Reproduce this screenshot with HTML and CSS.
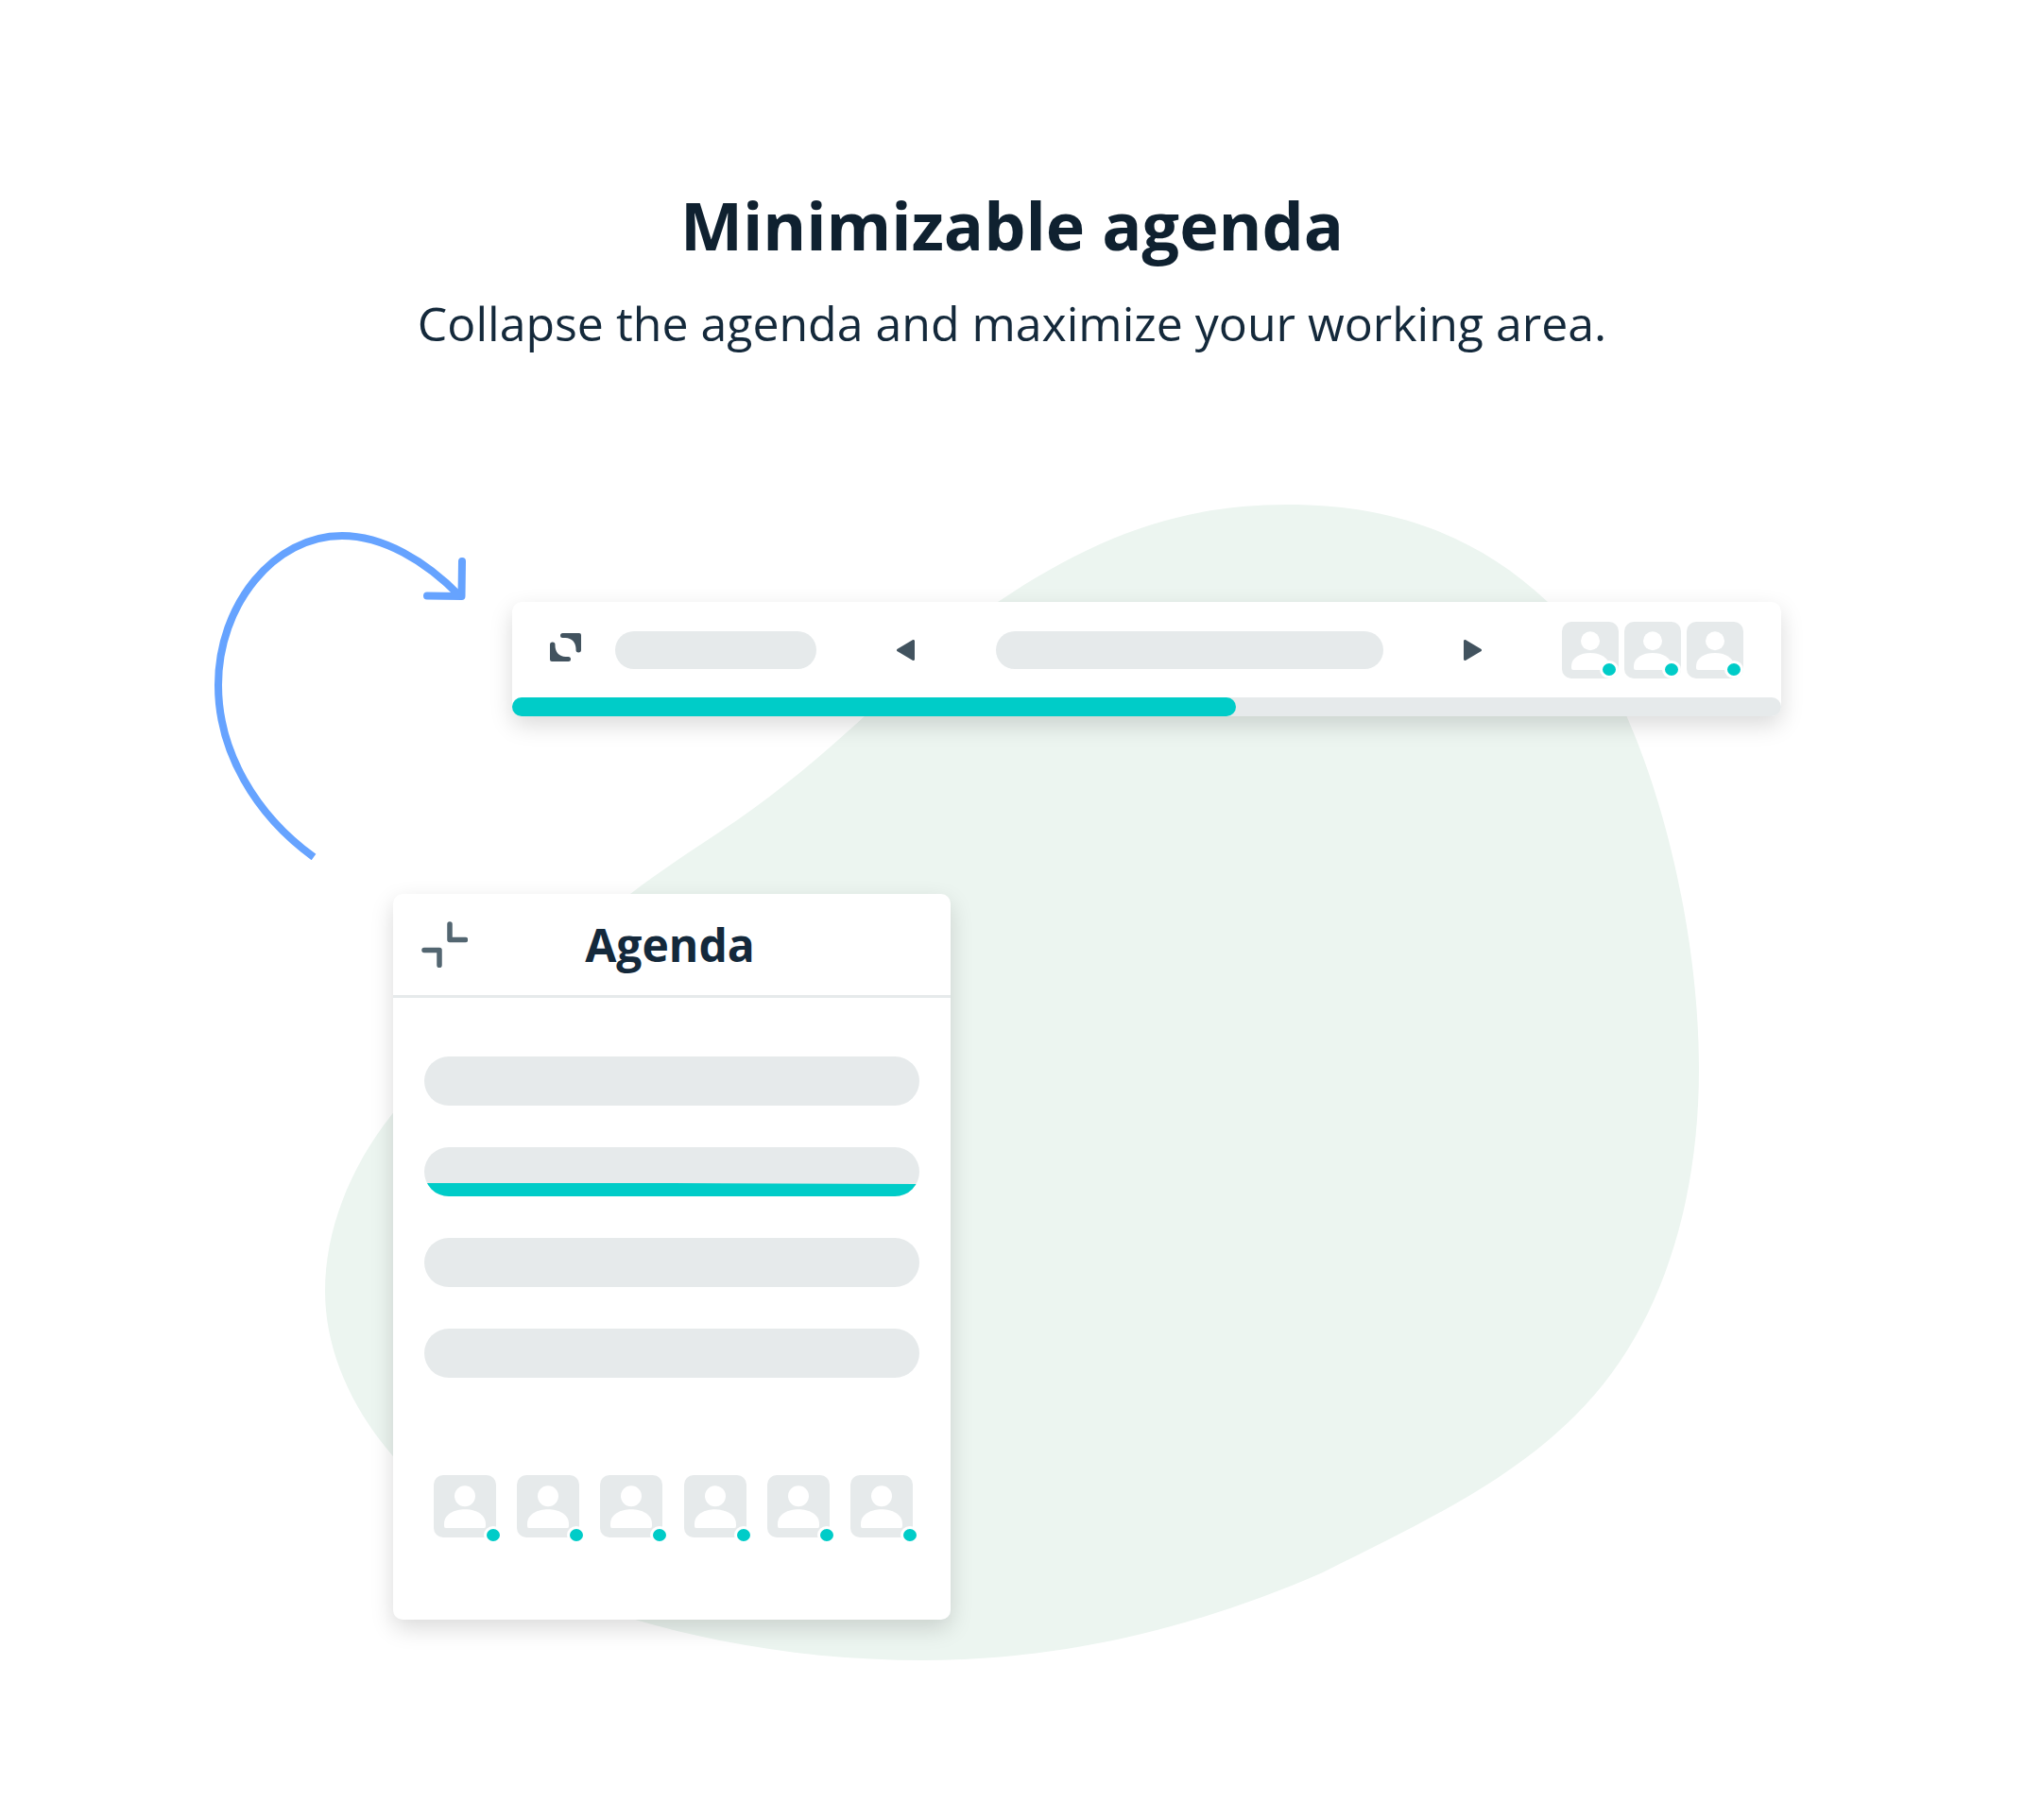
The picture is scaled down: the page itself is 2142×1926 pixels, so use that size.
FILE: index.html
```html
<!DOCTYPE html>
<html lang="en">
<head>
<meta charset="utf-8">
<meta name="viewport" content="width=device-width, initial-scale=1">
<title>Minimizable agenda</title>
<link rel="stylesheet" href="styles.css">
</head>
<body>
<svg class="defs" aria-hidden="true">
  <symbol id="person" viewBox="0 0 60 60">
    <circle cx="30" cy="20.3" r="10"/>
    <path d="M10 47C10 37.500 20 33 30 33S50 37.500 50 47V49Q50 51 48 51H12Q10 51 10 49Z"/>
  </symbol>
</svg>

<header class="intro">
  <h1 class="intro-title">Minimizable agenda</h1>
  <p class="intro-text">Collapse the agenda and maximize your working area.</p>
</header>

<main class="scene">
  <svg class="blob" viewBox="344 534 1454 1223" aria-hidden="true">
    <path d="M1362 534C1475 534 1564 567 1638 637C1672 669 1700 710 1721 757C1769 865 1798 1010 1798 1131C1798 1275 1757 1410 1667 1498C1600 1565 1515 1607 1400 1664C1260 1725 1120 1757 977 1757C870 1757 768 1742 672 1714C570 1683 480 1615 415 1540C370 1487 344 1427 344 1366C344 1300 372 1233 415 1179C480 1095 565 1022 667 946C705 917 743 893 780 868C828 835 872 797 915 758C962 716 1007 675 1056 637C1160 567 1250 534 1362 534Z"/>
  </svg>

  <svg class="arrow" viewBox="227 563 268 347" aria-hidden="true">
    <path d="M332 907C270 862 231 795 231 725C231 640 290 567 362 567C405 567 450 593 487 631"/>
    <path class="arrow-head" d="M489 594L488.500 631L452 630.500"/>
  </svg>

  <section class="toolbar" aria-label="Minimized agenda">
    <div class="toolbar-row">
      <div class="toolbar-topic">
        <button class="icon-button" type="button" aria-label="Expand agenda">
          <svg class="icon-expand" viewBox="0 0 33 30">
            <path id="corner" d="M13.500 0H31Q33 0 33 2V17.800A2.750 2.750 0 0 1 27.500 17.800V16.500C27.500 10 23 5 16.500 5H13.500A2.500 2.500 0 0 1 13.500 0Z"/>
            <use href="#corner" transform="rotate(180 16.500 15)"/>
          </svg>
        </button>
        <span class="pill pill-short"></span>
      </div>
      <button class="icon-button" type="button" aria-label="Previous topic">
        <svg class="icon-step" viewBox="0 0 19 22"><path d="M17.500 1.500V20.500L1.500 11Z"/></svg>
      </button>
      <span class="pill pill-long"></span>
      <button class="icon-button" type="button" aria-label="Next topic">
        <svg class="icon-step" viewBox="0 0 19 22"><path d="M1.500 1.500V20.500L17.500 11Z"/></svg>
      </button>
      <div class="people people-small">
        <span class="avatar"><svg><use href="#person"/></svg></span>
        <span class="avatar"><svg><use href="#person"/></svg></span>
        <span class="avatar"><svg><use href="#person"/></svg></span>
      </div>
    </div>
    <div class="progress" role="progressbar" aria-label="Elapsed time" aria-valuenow="57" aria-valuemin="0" aria-valuemax="100">
      <div class="progress-fill" style="width:57%"></div>
    </div>
  </section>

  <section class="card" aria-labelledby="agenda-title">
    <div class="card-header">
      <button class="icon-button" type="button" aria-label="Collapse agenda">
        <svg class="icon-collapse" viewBox="0 0 49 49">
          <path d="M30 3V19.500H46.500M3 30.500H19V46.500"/>
        </svg>
      </button>
      <h2 class="card-title" id="agenda-title">Agenda</h2>
    </div>
    <ul class="topics">
      <li class="topic"></li>
      <li class="topic topic-active"></li>
      <li class="topic"></li>
      <li class="topic"></li>
    </ul>
    <div class="people people-large">
      <span class="avatar"><svg><use href="#person"/></svg></span>
      <span class="avatar"><svg><use href="#person"/></svg></span>
      <span class="avatar"><svg><use href="#person"/></svg></span>
      <span class="avatar"><svg><use href="#person"/></svg></span>
      <span class="avatar"><svg><use href="#person"/></svg></span>
      <span class="avatar"><svg><use href="#person"/></svg></span>
    </div>
  </section>
</main>
</body>
</html>
```
FILE: styles.css
```css
:root {
  --ink: #0f2130;
  --ink-soft: #14293b;
  --icon: #42535f;
  --line: #e6eaeb;
  --teal: #00ccc8;
  --mint: #ecf5f0;
  --blue: #66a3ff;
  --shadow: 0 9px 24px rgba(0, 0, 0, .15);
}

*,
*::after {
  box-sizing: border-box;
}

body {
  margin: 0;
  background: #fff;
  color: var(--ink);
  font-family: "Open Sans", "Noto Sans", sans-serif;
}

h1, h2, p, ul {
  margin: 0;
  padding: 0;
}

svg {
  display: block;
}

.defs {
  display: none;
}

.intro {
  display: flex;
  flex-direction: column;
  align-items: center;
  gap: 30px;
  padding: 198px 24px 158px;
  text-align: center;
}

.intro-title {
  font-size: 70px;
  font-weight: 700;
  line-height: 80px;
}

.intro-text {
  color: var(--ink-soft);
  font-size: 50px;
  line-height: 68px;
}

/* Column shares: the blob, toolbar, arrow and card overlap on the same tracks. */
.scene {
  display: grid;
  grid-template-columns: 227fr 117fr 72fr 126fr 464fr 792fr 87fr 257fr;
  grid-template-rows: auto auto 1fr;
  align-items: start;
  padding-bottom: 168px;
}

.blob {
  grid-column: 3 / 7;
  grid-row: 1 / 4;
  width: 100%;
  fill: var(--mint);
}

.arrow {
  grid-column: 2 / 5;
  grid-row: 1;
  width: 268px;
  margin-top: 29px;
  fill: none;
  stroke: var(--blue);
  stroke-width: 8;
}

.arrow-head {
  stroke-linecap: round;
  stroke-linejoin: round;
}

.toolbar {
  grid-column: 5 / 8;
  grid-row: 1;
  margin-top: 103px;
  border-radius: 10px;
  background: #fff;
  box-shadow: var(--shadow);
}

.toolbar-row {
  display: flex;
  align-items: center;
  justify-content: space-between;
  height: 101px;
  padding: 0 40px;
}

.toolbar-topic {
  display: flex;
  align-items: center;
  gap: 36px;
}

.icon-button {
  padding: 0;
  border: 0;
  background: none;
  cursor: pointer;
}

.icon-expand {
  width: 33px;
  height: 30px;
  margin-bottom: 6px;
  fill: var(--icon);
}

.icon-step {
  width: 19px;
  height: 22px;
  fill: var(--icon);
  stroke: var(--icon);
  stroke-width: 3;
  stroke-linejoin: round;
}

.icon-collapse {
  width: 49px;
  height: 49px;
  fill: none;
  stroke: #536671;
  stroke-width: 5.5;
  stroke-linecap: round;
  stroke-linejoin: round;
}

.pill {
  height: 40px;
  border-radius: 20px;
  background: var(--line);
}

.pill-short {
  width: 213px;
}

.pill-long {
  width: 410px;
}

.progress {
  height: 20px;
  border-radius: 10px;
  background: var(--line);
}

.progress-fill {
  height: 100%;
  border-radius: 10px;
  background: var(--teal);
}

.people {
  display: flex;
}

.people-small {
  --size: 60px;
  --dot-offset: 0px;
  gap: 6px;
}

.people-large {
  --size: 66px;
  --dot-offset: -7px;
  justify-content: space-between;
  padding: 103px 40px 87px 43px;
}

.avatar {
  position: relative;
  width: var(--size);
  height: var(--size);
  border-radius: 10px;
  background: var(--line);
}

.avatar svg {
  width: 100%;
  height: 100%;
  fill: #fff;
}

.avatar::after {
  content: "";
  position: absolute;
  right: var(--dot-offset);
  bottom: var(--dot-offset);
  width: 20px;
  height: 19px;
  border: 3px solid #fff;
  border-radius: 50%;
  background: var(--teal);
}

.card {
  grid-column: 4 / 6;
  grid-row: 2;
  margin-top: 36px;
  border-radius: 10px;
  background: #fff;
  box-shadow: var(--shadow);
}

.card-header {
  display: grid;
  grid-template-columns: 49px 1fr 49px;
  align-items: center;
  height: 110px;
  padding: 0 34px 0 30px;
  border-bottom: 3px solid var(--line);
}

.card-title {
  color: var(--ink-soft);
  font-size: 48px;
  font-weight: 700;
  line-height: 64px;
  text-align: center;
}

.topics {
  display: grid;
  gap: 44px;
  padding: 62px 33px 0;
  list-style: none;
}

.topic {
  height: 52px;
  border-radius: 26px;
  background: var(--line);
  overflow: hidden;
}

.topic-active {
  display: flex;
  align-items: flex-end;
}

.topic-active::after {
  content: "";
  flex: 1;
  height: 14px;
  background: var(--teal);
  clip-path: polygon(0 0, 50% 0, 100% 1px, 100% 100%, 0 100%);
}
```
